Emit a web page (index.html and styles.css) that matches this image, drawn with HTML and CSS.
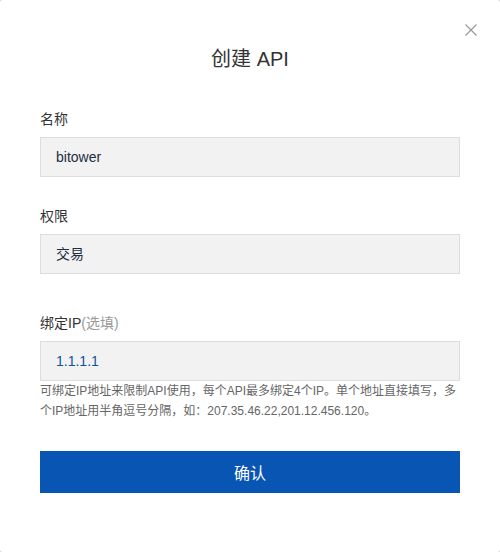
FILE: index.html
```html
<!DOCTYPE html>
<html lang="zh-CN">
<head>
<meta charset="utf-8">
<title>创建 API</title>
<link rel="stylesheet" href="styles.css">
</head>
<body>
<div class="dialog">
  <button class="close" aria-label="关闭">
    <svg width="12" height="12" viewBox="0 0 12 12"><path d="M0.5 0.5L11.5 11.5M11.5 0.5L0.5 11.5" stroke="#9a9a9a" stroke-width="1.2" fill="none"/></svg>
  </button>
  <h1 class="title">创建 API</h1>
  <div class="group">
    <div class="label">名称</div>
    <div class="field">bitower</div>
  </div>
  <div class="group">
    <div class="label">权限</div>
    <div class="field">交易</div>
  </div>
  <div class="group group-ip">
    <div class="label">绑定IP<span class="optional">(选填)</span></div>
    <div class="field field-ip">1.1.1.1</div>
    <p class="help"><span class="line">可绑定IP地址来限制API使用，每个API最多绑定4个IP。单个地址直接填写，多</span><br><span class="line">个IP地址用半角逗号分隔，如：207.35.46.22,201.12.456.120。</span></p>
  </div>
  <button class="confirm">确认</button>
</div>
</body>
</html>
```
FILE: styles.css
```css
html, body {
  margin: 0;
  padding: 0;
  background: #d8d8d8;
}
body {
  font-family: "Liberation Sans", "Noto Sans CJK SC", sans-serif;
  color: #333;
}
.dialog {
  position: relative;
  box-sizing: border-box;
  width: 500px;
  height: 552px;
  background: #fff;
  border-radius: 3px;
  padding: 45px 40px 0;
  display: flex;
  flex-direction: column;
}
.close {
  position: absolute;
  top: 24px;
  right: 23px;
  width: 12px;
  height: 12px;
  padding: 0;
  border: 0;
  background: none;
  display: flex;
}
.title {
  margin: 0 0 36px;
  font-size: 20px;
  line-height: 28px;
  font-weight: normal;
  text-align: center;
  color: #333;
}
.group {
  display: flex;
  flex-direction: column;
}
.group + .group {
  margin-top: 29px;
}
.group-ip {
  margin-top: 39px !important;
}
.label {
  font-size: 14px;
  line-height: 20px;
  margin-bottom: 8px;
  color: #333;
}
.optional {
  color: #999;
}
.field {
  box-sizing: border-box;
  height: 40px;
  border: 1px solid #dcdde2;
  background: #f2f2f2;
  padding: 0 15px;
  font-size: 14px;
  line-height: 38px;
  color: #1d2d3d;
}
.field-ip {
  color: #0c5495;
}
.help {
  margin: 0;
  font-size: 12px;
  line-height: 20px;
  color: #666;
}
.line {
  white-space: nowrap;
}
.confirm {
  margin-top: 30px;
  height: 42px;
  border: 0;
  padding: 0;
  background: #0955b3;
  color: #fff;
  font-family: inherit;
  font-size: 16px;
}
```
